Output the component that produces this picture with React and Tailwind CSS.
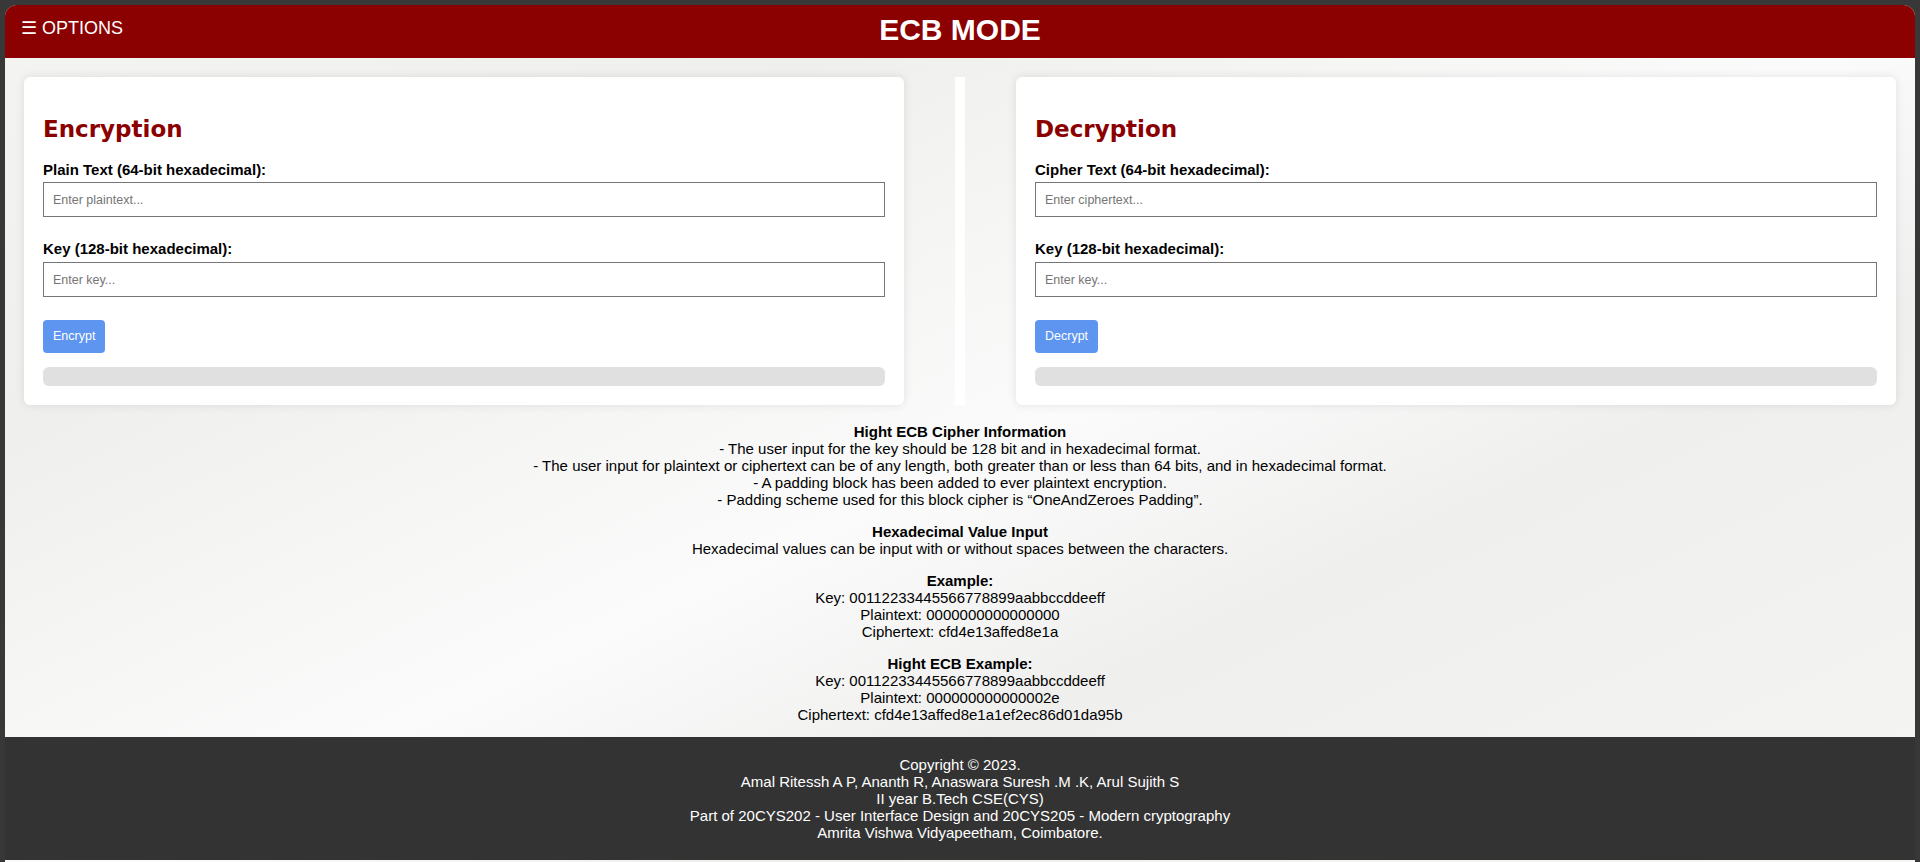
import React from "react";

function Card({ title, label1, ph1, button }) {
  return (
    <div className="w-[880px] h-[328px] shrink-0 bg-white rounded-[6px] shadow-[0_0_10px_rgba(0,0,0,0.1)] px-[19px] pt-[38px] pb-[19px] flex flex-col">
      <h2 className="m-0 font-['DejaVu_Sans',Verdana,sans-serif] font-bold text-[23px] leading-[28px] text-[#8b0000]">
        {title}
      </h2>
      <label className="mt-[18px] text-[15px] leading-[17px] font-bold text-black">{label1}</label>
      <input
        className="mt-[4px] h-[35px] w-full border border-[#767676] px-[9px] text-[12.5px] placeholder:text-[#757575] outline-none bg-white"
        placeholder={ph1}
      />
      <label className="mt-[23px] text-[15px] leading-[17px] font-bold text-black">Key (128-bit hexadecimal):</label>
      <input
        className="mt-[5px] h-[35px] w-full border border-[#767676] px-[9px] text-[12.5px] placeholder:text-[#757575] outline-none bg-white"
        placeholder="Enter key..."
      />
      <div className="mt-[23px]">
        <button className="h-[33px] px-[10px] rounded-[4px] bg-[#5d95f0] text-white text-[12.5px]">{button}</button>
      </div>
      <div className="mt-[14px] h-[19px] w-full rounded-[6px] bg-[#e0e0e0]"></div>
    </div>
  );
}

export default function App() {
  return (
    <div className="h-[862px] overflow-hidden bg-[#383838] pt-[5px] px-[5px] font-['Liberation_Sans',Arial,sans-serif]">
      <div className="h-full rounded-t-[12px] overflow-hidden bg-[linear-gradient(155deg,#f4f4f3_0%,#efefee_25%,#f6f6f5_40%,#fbfbfb_52%,#efefee_68%,#f5f5f4_100%)]">
        <header className="h-[53px] bg-[#8b0000] grid grid-cols-[1fr_auto_1fr] items-center">
          <div className="pl-[16px] text-white text-[18px] leading-none pb-[8px]">☰ OPTIONS</div>
          <h1 className="m-0 text-white font-bold text-[30px] leading-none pb-[4px]">ECB MODE</h1>
          <div></div>
        </header>

        <main className="px-[19px] pt-[19px]">
          <div className="flex items-stretch gap-[51px]">
            <Card title="Encryption" label1="Plain Text (64-bit hexadecimal):" ph1="Enter plaintext..." button="Encrypt" />
            <div className="w-[10px] shrink-0 bg-white"></div>
            <Card title="Decryption" label1="Cipher Text (64-bit hexadecimal):" ph1="Enter ciphertext..." button="Decrypt" />
          </div>

          <div className="mt-[18px] pb-[14px] text-center text-[15px] leading-[17px] text-black flex flex-col gap-[15px]">
            <div>
              <div className="font-bold">Hight ECB Cipher Information</div>
              <div>- The user input for the key should be 128 bit and in hexadecimal format.</div>
              <div>- The user input for plaintext or ciphertext can be of any length, both greater than or less than 64 bits, and in hexadecimal format.</div>
              <div>- A padding block has been added to ever plaintext encryption.</div>
              <div>- Padding scheme used for this block cipher is “OneAndZeroes Padding”.</div>
            </div>
            <div>
              <div className="font-bold">Hexadecimal Value Input</div>
              <div>Hexadecimal values can be input with or without spaces between the characters.</div>
            </div>
            <div>
              <div className="font-bold">Example:</div>
              <div>Key: 00112233445566778899aabbccddeeff</div>
              <div>Plaintext: 0000000000000000</div>
              <div>Ciphertext: cfd4e13affed8e1a</div>
            </div>
            <div>
              <div className="font-bold">Hight ECB Example:</div>
              <div>Key: 00112233445566778899aabbccddeeff</div>
              <div>Plaintext: 000000000000002e</div>
              <div>Ciphertext: cfd4e13affed8e1a1ef2ec86d01da95b</div>
            </div>
          </div>
        </main>

        <footer className="bg-[#333333] text-white text-center text-[15px] leading-[17px] py-[19px]">
          <div>Copyright © 2023.</div>
          <div>Amal Ritessh A P, Ananth R, Anaswara Suresh .M .K, Arul Sujith S</div>
          <div>II year B.Tech CSE(CYS)</div>
          <div>Part of 20CYS202 - User Interface Design and 20CYS205 - Modern cryptography</div>
          <div>Amrita Vishwa Vidyapeetham, Coimbatore.</div>
        </footer>
      </div>
    </div>
  );
}
